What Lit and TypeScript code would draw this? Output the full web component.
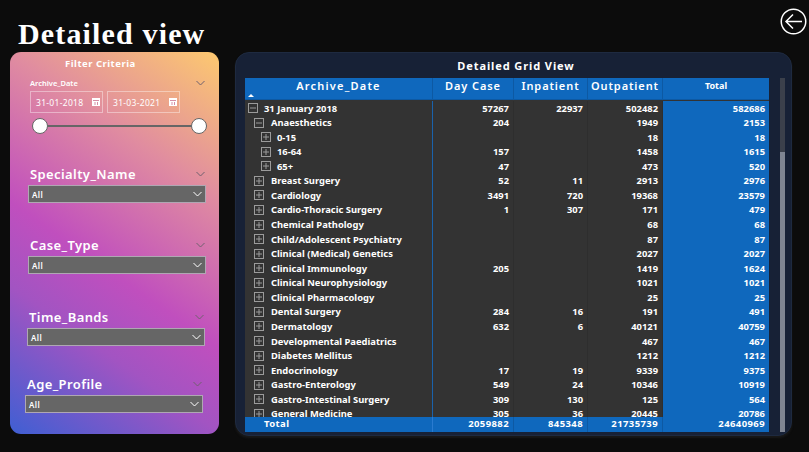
import { html, LitElement, css, svg } from "lit";
import { customElement } from "lit/decorators.js";

type Row = { label: string; level: number; open?: boolean; values: string[] };

const ROWS: Row[] = [
  { label: "31 January 2018", level: 0, open: true, values: ["57267", "22937", "502482", "582686"] },
  { label: "Anaesthetics", level: 1, open: true, values: ["204", "", "1949", "2153"] },
  { label: "0-15", level: 2, values: ["", "", "18", "18"] },
  { label: "16-64", level: 2, values: ["157", "", "1458", "1615"] },
  { label: "65+", level: 2, values: ["47", "", "473", "520"] },
  { label: "Breast Surgery", level: 1, values: ["52", "11", "2913", "2976"] },
  { label: "Cardiology", level: 1, values: ["3491", "720", "19368", "23579"] },
  { label: "Cardio-Thoracic Surgery", level: 1, values: ["1", "307", "171", "479"] },
  { label: "Chemical Pathology", level: 1, values: ["", "", "68", "68"] },
  { label: "Child/Adolescent Psychiatry", level: 1, values: ["", "", "87", "87"] },
  { label: "Clinical (Medical) Genetics", level: 1, values: ["", "", "2027", "2027"] },
  { label: "Clinical Immunology", level: 1, values: ["205", "", "1419", "1624"] },
  { label: "Clinical Neurophysiology", level: 1, values: ["", "", "1021", "1021"] },
  { label: "Clinical Pharmacology", level: 1, values: ["", "", "25", "25"] },
  { label: "Dental Surgery", level: 1, values: ["284", "16", "191", "491"] },
  { label: "Dermatology", level: 1, values: ["632", "6", "40121", "40759"] },
  { label: "Developmental Paediatrics", level: 1, values: ["", "", "467", "467"] },
  { label: "Diabetes Mellitus", level: 1, values: ["", "", "1212", "1212"] },
  { label: "Endocrinology", level: 1, values: ["17", "19", "9339", "9375"] },
  { label: "Gastro-Enterology", level: 1, values: ["549", "24", "10346", "10919"] },
  { label: "Gastro-Intestinal Surgery", level: 1, values: ["309", "130", "125", "564"] },
  { label: "General Medicine", level: 1, values: ["305", "36", "20445", "20786"] },
];

const TOTALS = ["2059882", "845348", "21735739", "24640969"];

const SLICERS = [
  { name: "Specialty_Name", cls: "specialty" },
  { name: "Case_Type", cls: "case" },
  { name: "Time_Bands", cls: "time" },
  { name: "Age_Profile", cls: "age" },
];

const chevron = (cls: string) => html`<svg class=${cls} width="9" height="6" viewBox="0 0 9 6">
  <path d="M.5 1l4 4 4-4" fill="none" stroke="currentColor" stroke-width="1" />
</svg>`;

const calendar = html`<svg class="cal" width="8" height="8" viewBox="0 0 8 8">
  <rect width="8" height="8" fill="#fff" />
  <path d="M1 2.5h6M3 4v3M5.5 4v3" stroke="#d58fa6" stroke-width="1" fill="none" />
</svg>`;

const expander = (open?: boolean) => html`<svg class="box" width="10" height="10" viewBox="0 0 10 10">
  <rect x=".5" y=".5" width="9" height="9" fill="none" stroke="#9b9b9b" />
  ${svg`<path d="M2 5h6" stroke="#9b9b9b" />`}
  ${open ? null : svg`<path d="M5 2v6" stroke="#9b9b9b" />`}
</svg>`;

@customElement("app-root")
export class AppRoot extends LitElement {
  static styles = css`
    :host {
      display: grid;
      grid-template-columns: 235px 574px;
      width: 809px;
      height: 452px;
      overflow: hidden;
      background: #0c0c0c;
      color: #fff;
      font-family: "Noto Sans", "Open Sans", sans-serif;
    }

    .left {
      padding-left: 10px;
    }

    h1 {
      height: 52px;
      margin: 0 0 0 8px;
      font: 700 30px/68px "Liberation Serif", serif;
      letter-spacing: 1.15px;
      white-space: nowrap;
    }

    .filters {
      width: 209px;
      height: 382px;
      box-sizing: border-box;
      padding-top: 5px;
      border-radius: 11px;
      background: linear-gradient(215deg, #fdc96f 0%, #e08ca0 28%, #c04fbe 56%, #a254c2 72%, #3f5fd3 100%);
    }

    .filters-title {
      margin-left: 55px;
      font-size: 9.5px;
      font-weight: 700;
      line-height: 13px;
      letter-spacing: 0.5px;
    }

    .date-slicer {
      margin: 7px 0 0 20px;
      width: 175px;
    }

    .date-head {
      display: flex;
      justify-content: space-between;
      align-items: center;
      font-size: 7.5px;
      font-weight: 600;
      line-height: 12px;
    }

    .dates {
      display: flex;
      gap: 4px;
      margin-top: 2px;
    }

    .date {
      display: flex;
      align-items: center;
      justify-content: space-between;
      box-sizing: border-box;
      width: 73px;
      height: 22px;
      padding: 0 2px 0 5px;
      border: 1.5px solid rgba(255, 255, 255, 0.4);
      font-size: 8.5px;
      letter-spacing: 0.3px;
    }

    .slider {
      display: flex;
      align-items: center;
      justify-content: space-between;
      width: 175px;
      height: 18px;
      margin: 4px 0 0 2px;
      background: linear-gradient(#666, #666) center / 100% 2px no-repeat;
    }

    .thumb {
      width: 14px;
      height: 14px;
      border: 1px solid #666;
      border-radius: 50%;
      background: #fff;
    }

    .slicer {
      width: 178px;
    }

    .slicer-head {
      display: flex;
      justify-content: space-between;
      align-items: center;
      box-sizing: border-box;
      padding: 2px 1px 0 2px;
      height: 18px;
      font-size: 13px;
      font-weight: 600;
      letter-spacing: 0.4px;
      white-space: nowrap;
    }

    .head-chevron {
      color: #70606f;
    }

    .select {
      display: flex;
      justify-content: space-between;
      align-items: center;
      box-sizing: border-box;
      height: 18px;
      margin-top: 3px;
      padding: 0 3px 0 3px;
      border: 1.5px solid rgba(200, 190, 205, 0.75);
      background: #666;
      font-size: 8px;
      font-weight: 600;
      letter-spacing: 0.4px;
    }

    .specialty {
      margin: 29px 0 0 18px;
    }

    .case {
      margin: 32px 0 0 18px;
    }

    .time {
      margin: 33px 0 0 17px;
    }

    .age {
      margin: 28px 0 0 15px;
    }

    .right {
      display: flex;
      flex-direction: column;
    }

    .top {
      display: flex;
      justify-content: flex-end;
      height: 52px;
      padding: 8px 2px 0 0;
      box-sizing: border-box;
    }

    .grid-panel {
      position: relative;
      width: 557px;
      height: 384px;
      box-sizing: border-box;
      padding: 5px 0 0 9px;
      border: 1px solid #1e2a40;
      border-radius: 14px;
      background: #172136;
      box-shadow: 0 2px 2px #191919;
    }

    .grid-title {
      box-sizing: border-box;
      width: 524px;
      height: 20px;
      padding-left: 18px;
      font-size: 11px;
      font-weight: 700;
      line-height: 16px;
      letter-spacing: 0.9px;
      text-align: center;
    }

    .table {
      width: 524px;
      height: 354px;
      display: flex;
      flex-direction: column;
    }

    .row {
      display: grid;
      grid-template-columns: 188px 81px 74px 75px 106px;
      flex: none;
    }

    .head {
      height: 22px;
      background: #0f68bd;
      font-size: 11px;
      font-weight: 600;
      letter-spacing: 1.2px;
      text-align: center;
      line-height: 16px;
    }

    .head > div {
      position: relative;
      box-sizing: border-box;
      border-right: 1px solid #0d59a3;
      border-bottom: 1px solid #0d59a3;
      white-space: nowrap;
    }

    .head .col {
      letter-spacing: 0.9px;
    }

    .head .total-head {
      border-right: 0;
      font-size: 9px;
      font-weight: 700;
      letter-spacing: 0;
      line-height: 15px;
    }

    .sort {
      position: absolute;
      left: 3px;
      bottom: 2px;
      width: 0;
      height: 0;
      border: 3px solid transparent;
      border-top: 0;
      border-bottom-color: #fff;
    }

    .body {
      flex: 1;
      overflow: hidden;
      padding-top: 0.5px;
      background: #333;
    }

    .body .row {
      height: 14.57px;
      font-size: 9.4px;
      font-weight: 700;
      line-height: 15px;
    }

    .cell {
      box-sizing: border-box;
      padding-right: 4px;
      border-right: 1px solid #2e2e2e;
      border-bottom: 1px solid #2e2e2e;
      background: #333;
      text-align: right;
      white-space: nowrap;
    }

    .label {
      display: flex;
      align-items: center;
      gap: 6px;
      border-right-color: #1a62ab;
      text-align: left;
    }

    .lvl0 {
      padding-left: 3px;
    }

    .lvl1 {
      padding-left: 9px;
      gap: 7px;
    }

    .lvl2 {
      padding-left: 16px;
    }

    .box {
      flex: none;
    }

    .cell.total {
      border-right: 0;
      border-bottom-color: #0d59a3;
      background: #0f68bd;
    }

    .foot {
      height: 15px;
      background: #0f68bd;
      font-size: 9.5px;
      font-weight: 700;
      line-height: 14px;
      letter-spacing: 0.4px;
      text-align: right;
    }

    .foot > div {
      padding-right: 4px;
      border-right: 1px solid #0d59a3;
    }

    .foot .foot-label {
      padding-left: 19px;
      border-right-color: #2a7bd0;
      text-align: left;
    }

    .foot > div:last-child {
      border-right: 0;
    }

    .scrollbar {
      position: absolute;
      left: 544px;
      top: 25px;
      width: 5px;
      height: 354px;
      background: #7f8592;
    }

    .scrollbar div {
      height: 74px;
      background: #3b404b;
    }

    .select-chevron {
      color: #fff;
    }
  `;

  render() {
    return html`
      <div class="left">
        <h1>Detailed view</h1>
        <div class="filters">
          <div class="filters-title">Filter Criteria</div>
          <div class="date-slicer">
            <div class="date-head"><span>Archive_Date</span>${chevron("head-chevron")}</div>
            <div class="dates">
              <div class="date">31-01-2018${calendar}</div>
              <div class="date">31-03-2021${calendar}</div>
            </div>
            <div class="slider"><div class="thumb"></div><div class="thumb"></div></div>
          </div>
          ${SLICERS.map(
            (s) => html`<div class="slicer ${s.cls}">
              <div class="slicer-head"><span>${s.name}</span>${chevron("head-chevron")}</div>
              <div class="select"><span>All</span>${chevron("select-chevron")}</div>
            </div>`
          )}
        </div>
      </div>
      <div class="right">
        <div class="top">
          <svg width="27" height="27" viewBox="0 0 27 27">
            <circle cx="13.5" cy="13.5" r="12.25" fill="none" stroke="#fff" stroke-width="1.5" />
            <path d="M22 13.5H6M13 6.5l-7 7 7 7" fill="none" stroke="#fff" stroke-width="1.5" />
          </svg>
        </div>
        <div class="grid-panel">
          <div class="grid-title">Detailed Grid View</div>
          <div class="table">
            <div class="row head">
              <div>Archive_Date<span class="sort"></span></div>
              <div class="col">Day Case</div>
              <div class="col">Inpatient</div>
              <div class="col">Outpatient</div>
              <div class="total-head">Total</div>
            </div>
            <div class="body">
              ${ROWS.map(
                (r) => html`<div class="row">
                  <div class="cell label lvl${r.level}">${expander(r.open)}<span>${r.label}</span></div>
                  ${r.values.map((v, i) => html`<div class="cell ${i === 3 ? "total" : ""}">${v}</div>`)}
                </div>`
              )}
            </div>
            <div class="row foot">
              <div class="foot-label">Total</div>
              ${TOTALS.map((v) => html`<div>${v}</div>`)}
            </div>
          </div>
          <div class="scrollbar"><div></div></div>
        </div>
      </div>
    `;
  }
}
